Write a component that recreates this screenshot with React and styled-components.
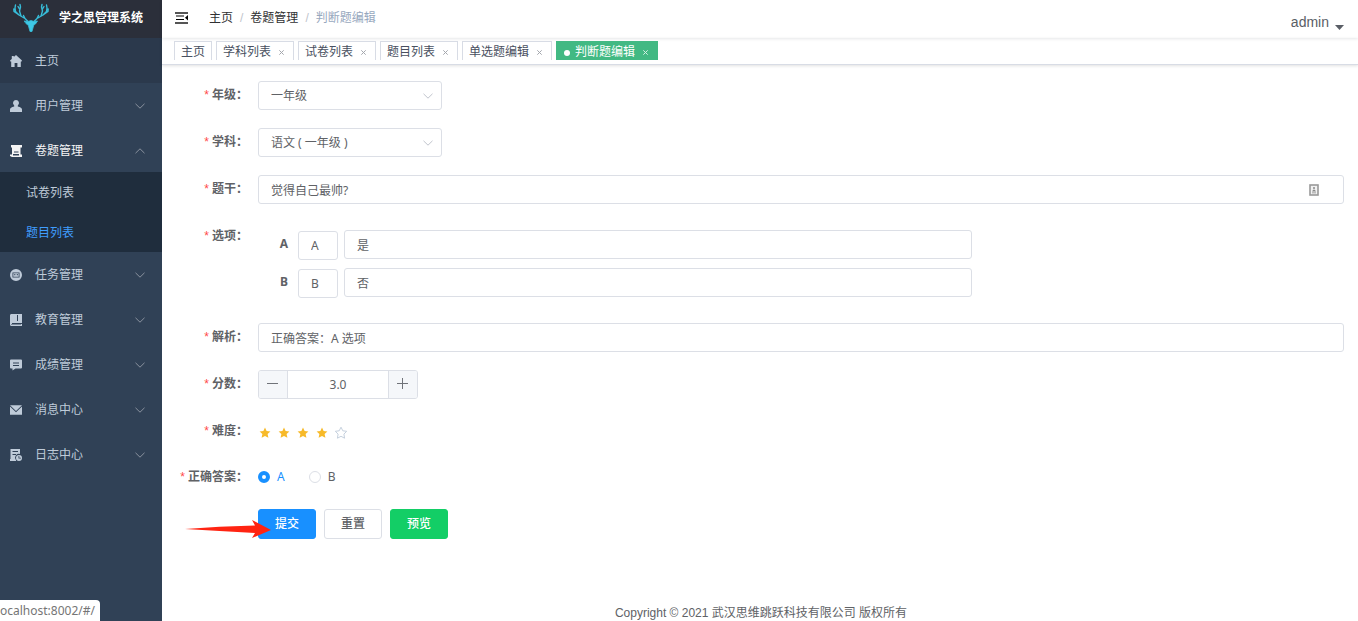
import React from 'react';
import styled, { createGlobalStyle, css } from 'styled-components';

const ui = '"Liberation Sans", "Noto Sans CJK SC", sans-serif';
const field = '"Noto Sans", "Noto Sans CJK SC", sans-serif';

const GlobalStyle = createGlobalStyle`
  *, *::before, *::after { box-sizing: border-box; }
  body { margin: 0; font-family: ${ui}; font-size: 12px; line-height: 16px; color: #606266; background: #fff; }
  a { color: inherit; text-decoration: none; }
  button, input, select { font: inherit; color: inherit; margin: 0; }
  svg { display: block; flex: none; }
`;

const Shell = styled.div`
  display: flex;
  min-height: 100vh;
`;

/* Sidebar */
const Sidebar = styled.aside`
  flex: none;
  width: 162px;
  background: #304156;
`;
const Brand = styled.a`
  display: flex;
  align-items: center;
  gap: 10px;
  height: 38px;
  padding: 0 13px 2px;
  background: #2b2f3a;
  white-space: nowrap;
  && { color: #fff; }
  font-weight: 700;
`;
const Menu = styled.ul`
  list-style: none;
  margin: 0;
  padding: 0;
`;
const MenuLink = styled.a`
  display: flex;
  align-items: center;
  height: 45px;
  padding: 0 17px 0 10px;
  background: ${p => (p.$hover ? '#2b394c' : 'transparent')};
  && { color: ${p => (p.$open ? '#f4f4f5' : '#bfcbd9')}; }
`;
const MenuText = styled.span`
  flex: 1;
  margin-left: 13px;
`;
const SubMenu = styled(Menu)`
  margin-top: -1px;
  background: #1f2d3d;
`;
const SubLink = styled.a`
  display: flex;
  align-items: center;
  height: 40px;
  padding: 2px 0 0 26px;
  && { color: ${p => (p.$active ? '#409eff' : '#bfcbd9')}; }
`;

/* Top bars */
const Main = styled.div`
  flex: 1;
  min-width: 0;
  display: flex;
  flex-direction: column;
`;
const Navbar = styled.header`
  display: flex;
  align-items: center;
  height: 38px;
  padding: 0 14px 2px 13px;
  box-shadow: 0 1px 3px rgba(0, 21, 41, 0.1);
`;
const IconButton = styled.button`
  padding: 0;
  border: 0;
  background: none;
  cursor: pointer;
`;
const Crumbs = styled.nav`
  display: flex;
  gap: 7px;
  flex: 1;
  margin-left: 20px;
  color: #303133;
`;
const Slash = styled.span`
  color: #c0c4cc;
`;
const Current = styled.span`
  color: #97a8be;
`;
const UserButton = styled(IconButton)`
  display: flex;
  align-items: flex-end;
  gap: 6px;
  padding-top: 8px;
  && { font-size: 14px; color: #5a5e66; }
`;
const TagsBar = styled.nav`
  display: flex;
  gap: 4px;
  height: 27px;
  padding: 3px 12px 5px;
  border-bottom: 1px solid #d8dce5;
  box-shadow: 0 1px 3px rgba(0, 0, 0, 0.12);
`;
const Tag = styled.div`
  display: flex;
  align-items: center;
  height: 19px;
  padding: 1px 6px 0;
  border: 1px solid #d8dce5;
  border-bottom: 0;
  color: #495060;
  white-space: nowrap;
  ${p => p.$active && css`
    background: #42b983;
    border-color: #42b983;
    color: #fff;
  `}
`;
const Dot = styled.span`
  width: 6px;
  height: 6px;
  margin: 2px 5px 0 1px;
  border-radius: 50%;
  background: #fff;
`;
const CloseButton = styled(IconButton)`
  display: grid;
  place-items: center;
  width: 12px;
  height: 12px;
  margin: 1px 0 0 4px;
  && { color: ${p => (p.$active ? '#d3efe2' : '#a3a6ad')}; }
`;

/* Form */
const Form = styled.form`
  display: flex;
  flex-direction: column;
  gap: 18px;
  padding: 16px 14px 0 0;
`;
const Item = styled.div`
  display: flex;
`;
const labelText = css`
  flex: none;
  width: 96px;
  padding-right: 10px;
  font-weight: 700;
  line-height: 28px;
  text-align: right;
  white-space: nowrap;
`;
const Label = styled.label`
  ${labelText}
`;
const GroupLabel = styled.span`
  ${labelText}
`;
const Star = styled.span`
  margin-right: 3px;
  font-weight: 400;
  color: #ff4949;
`;
const Content = styled.div`
  flex: 1;
  min-width: 0;
`;
const box = css`
  height: 29px;
  border: 1px solid #dcdfe6;
  border-radius: 3px;
  background: #fff;
  outline: none;
  && { font-family: ${field}; }
`;
const InputWrap = styled.div`
  display: flex;
  align-items: center;
  padding-right: 22px;
  ${box}
`;
const BareInput = styled.input`
  flex: 1;
  min-width: 0;
  height: 100%;
  padding: 0 12px;
  border: 0;
  outline: none;
  background: none;
`;
const TextInput = styled.input`
  ${box}
  width: ${p => p.$width || '100%'};
  padding: 0 12px;
`;
const LetterInput = styled(TextInput)`
  align-self: flex-end;
`;
const SelectWrap = styled.div`
  display: grid;
  grid-template-columns: 1fr 10px 9px;
  align-items: center;
  width: 184px;
  & > select { grid-area: 1 / 1 / 2 / 4; }
  & > svg { grid-area: 1 / 2; pointer-events: none; z-index: 1; }
`;
const Select = styled.select`
  ${box}
  appearance: none;
  width: 100%;
  padding: 1px 28px 0 12px;
  && { color: #606266; }
`;
const Options = styled.div`
  display: flex;
  flex-direction: column;
  gap: 8px;
  padding: 8px 0 7px;
`;
const OptionRow = styled.div`
  display: flex;
  height: 30px;
  gap: 6px;
`;
const OptionLabel = styled.label`
  width: 34px;
  padding-right: 4px;
  font-family: ${field};
  font-weight: 700;
  line-height: 28px;
  text-align: right;
`;
const Stepper = styled.div`
  ${box}
  display: flex;
  width: 160px;
  overflow: hidden;
`;
const StepButton = styled.button`
  display: grid;
  place-items: center;
  flex: none;
  width: 29px;
  padding: 0 1px 2px 0;
  border: 0 solid #dcdfe6;
  border-width: ${p => (p.$right ? '0 0 0 1px' : '0 1px 0 0')};
  background: #f5f7fa;
`;
const StepValue = styled(BareInput)`
  padding: 0;
  text-align: center;
`;
const Rate = styled.div`
  display: flex;
  align-items: center;
  gap: 5px;
  height: 28px;
  padding-top: 4px;
`;
const HiddenRadio = styled.input`
  appearance: none;
  position: absolute;
  width: 0;
  height: 0;
`;
const Radios = styled.div`
  display: flex;
  align-items: center;
  gap: 24px;
  height: 27px;
  font-family: ${field};
`;
const RadioLabel = styled.label`
  display: flex;
  align-items: center;
  gap: 7px;
  color: ${p => (p.$on ? '#1890ff' : '#606266')};
`;
const Radio = styled.input`
  appearance: none;
  width: 12px;
  height: 12px;
  border: 1px solid #dcdfe6;
  border-radius: 50%;
  background: #fff;
  &:checked { border: 4px solid #1890ff; }
`;
const Actions = styled.div`
  position: relative;
  display: flex;
  gap: 8px;
  padding-left: 96px;
`;
const Button = styled.button`
  height: 30px;
  padding: 0 16px;
  border: 1px solid ${p => p.$bg || '#dcdfe6'};
  border-radius: 3px;
  background: ${p => p.$bg || '#fff'};
  && { color: ${p => (p.$bg ? '#fff' : '#606266')}; font-weight: 500; }
`;
const Pointer = styled.svg`
  position: absolute;
  left: 23px;
  top: 11px;
  pointer-events: none;
`;
const Footer = styled.footer`
  margin-top: auto;
  padding-left: 2px;
  text-align: center;
`;
const StatusBubble = styled.div`
  position: fixed;
  left: 0;
  bottom: 0;
  width: 100px;
  height: 21px;
  border-radius: 0 4px 0 0;
  background: #fff;
  font-family: "Noto Sans", sans-serif;
  line-height: 21px;
  color: #757575;
  white-space: nowrap;
`;

/* Drawings */
const Deer = () => (
  <svg width="36" height="30" viewBox="0 0 36 30" fill="none" stroke="#37bcd8" strokeLinecap="round" strokeLinejoin="round">
    <path d="M15 18.500 12 15.500 6 12 2.500 8.500 2 5 2.500 2M6 12 1 8.500 .800 6M8 13 6.500 8 7.500 4 7 1.500M6.500 6 5 3.500M12 15.500 10.500 12.500M21 18.500 24 15.500 30 12 33.500 8.500 34 5 33.500 2M30 12 35 8.500 35.200 6M28 13 29.500 8 28.500 4 29 1.500M29.500 6 31 3.500M24 15.500 25.500 12.500" strokeWidth="1.400" />
    <path d="M11.500 18 15 18.500 18 17.500 21 18.500 24.500 18 22.500 21 20.800 22 19 28.500H17L15.200 22 13.500 21Z" fill="#3ec8e6" strokeWidth=".800" />
  </svg>
);
const Chevron = ({ up, color = '#8a929f' }) => (
  <svg width="10" height="6" viewBox="0 0 10 6" fill="none" stroke={color}>
    <path d={up ? 'M.5 5.2 5 .8 9.5 5.2' : 'M.5 .8 5 5.2 9.5 .8'} />
  </svg>
);
const shapes = {
  home: <path d="M6 0 12 5.600 11.300 6.800 10.800 6.400V12H7.400V8H4.600V12H1.200V6.400L.7 6.800 0 5.600 1.800 3.900V1H3.800V2Z" />,
  user: <path d="M6 0a3 3 0 0 1 1.800 5.400V6.500C10.500 7 12 8 12 9.500V12H0V9.500C0 8 1.500 7 4.200 6.500V5.400A3 3 0 0 1 6 0Z" />,
  paper: <path fillRule="evenodd" d="M1 0H12V2.500H10.500V9.500H12V12H2L0 11V9.500H2V2.500H1ZM4 6.500V7.500H8.500V6.500ZM3 9V10.500H9V9Z" />,
  task: <path fillRule="evenodd" d="M6 0a6 6 0 1 1 0 12A6 6 0 0 1 6 0ZM2.500 3.500V8.500H9.500V3.500ZM3.300 4.300H8.700V7.700H3.300ZM4.300 5V6.300H5.300V5ZM6.800 5V6.300H7.800V5Z" />,
  book: <path fillRule="evenodd" d="M1.500 0H12V9H2V10H12V12H1.500C.6 12 0 11.300 0 10.500V1.500C0 .6.600 0 1.500 0ZM7 1V7H8V1ZM1 10.500H11V11H1Z" />,
  chat: <path fillRule="evenodd" d="M1 .5H11Q12 .5 12 1.500V8.500Q12 9.500 11 9.500H5.500L2.500 11.500V9.500H1Q0 9.500 0 8.500V1.500Q0 .5 1 .5ZM3 3.500V4.500H9V3.500ZM3 6V7H9V6Z" />,
  mail: <path d="M0 1.200H12L6 7ZM0 2.500 6 8.300 12 2.500V10.800H0Z" />,
  log: <path fillRule="evenodd" d="M.5 0H10V5A4 4 0 0 0 5.400 10.500H6V12H0V10H.5ZM2.500 2V3H8V2ZM2.500 5V6H6V5ZM9 6A3 3 0 1 1 9 12 3 3 0 0 1 9 6ZM8.500 7V9.500H11V8.700H9.300V7Z" />,
};
const MenuIcon = ({ name }) => (
  <svg width="12" height="12" viewBox="0 0 12 12" fill="currentColor">{shapes[name]}</svg>
);
const Fold = () => (
  <svg width="14" height="12" viewBox="0 0 14 12">
    <path d="M0 0H13V2H0ZM0 10H13V12H0Z" fill="#555" />
    <path d="M1 3.500H9V4.500H1ZM1 7H9V8H1ZM13 3V8.500L10 5.800Z" fill="#000" />
  </svg>
);
const Cross = () => (
  <svg width="5" height="5" viewBox="0 0 5 5" stroke="currentColor"><path d="M.3.3 4.700 4.700M4.700.3.3 4.700" /></svg>
);
const Contact = () => (
  <svg width="12" height="12" viewBox="0 0 12 12">
    <rect x="1" y="1" width="8" height="10" fill="#f2f2f2" stroke="#999" strokeWidth="1.600" />
    <circle cx="5" cy="4" r="1" fill="#888" />
    <path d="M3 7.500Q5 3.500 7 7.500ZM3 8.500H7V9.300H3Z" fill="#888" />
  </svg>
);
const RateStar = ({ on }) => (
  <svg width="14" height="14" viewBox="0 0 14 14">
    {on
      ? <path fill="#f7ba2a" d="M7 1.500 8.600 5 12.400 5.400 9.600 8 10.400 11.800 7 9.900 3.600 11.800 4.400 8 1.600 5.400 5.400 5Z" />
      : <path fill="none" stroke="#c6d1de" d="M7 1.200 8.800 4.800 12.700 5.300 9.900 8.100 10.600 12.200 7 10.300 3.400 12.200 4.100 8.100 1.300 5.300 5.200 4.800Z" />}
  </svg>
);

const entries = [
  ['home', '主页'], ['user', '用户管理'], ['paper', '卷题管理'], ['task', '任务管理'],
  ['book', '教育管理'], ['chat', '成绩管理'], ['mail', '消息中心'], ['log', '日志中心'],
];
const tags = ['主页', '学科列表', '试卷列表', '题目列表', '单选题编辑', '判断题编辑'];

const Entry = ({ icon, text }) => {
  const open = icon === 'paper';
  const home = icon === 'home';
  return (
    <li>
      <MenuLink href="#/" $hover={home} $open={open}>
        <MenuIcon name={icon} />
        <MenuText>{text}</MenuText>
        {!home && <Chevron up={open} />}
      </MenuLink>
      {open && (
        <SubMenu>
          <li><SubLink href="#/">试卷列表</SubLink></li>
          <li><SubLink href="#/" $active>题目列表</SubLink></li>
        </SubMenu>
      )}
    </li>
  );
};

const Field = ({ label, id, children }) => (
  <Item>
    {id
      ? <Label htmlFor={id}><Star>*</Star>{label}：</Label>
      : <GroupLabel><Star>*</Star>{label}：</GroupLabel>}
    <Content>{children}</Content>
  </Item>
);

const Dropdown = ({ id, value }) => (
  <SelectWrap>
    <Select id={id} defaultValue={value}><option>{value}</option></Select>
    <Chevron color="#c0c4cc" />
  </SelectWrap>
);

export default function App() {
  return (
    <>
      <GlobalStyle />
      <Shell>
        <Sidebar>
          <Brand href="#/"><Deer />学之思管理系统</Brand>
          <Menu>
            {entries.map(([icon, text]) => <Entry key={icon} icon={icon} text={text} />)}
          </Menu>
        </Sidebar>
        <Main>
          <Navbar>
            <IconButton type="button" aria-label="折叠菜单"><Fold /></IconButton>
            <Crumbs>
              <a href="#/">主页</a><Slash>/</Slash>
              <a href="#/">卷题管理</a><Slash>/</Slash>
              <Current>判断题编辑</Current>
            </Crumbs>
            <UserButton type="button">
              admin
              <svg width="9" height="5" viewBox="0 0 9 5"><path d="M0 0H9L4.500 5Z" fill="#5a5e66" /></svg>
            </UserButton>
          </Navbar>
          <TagsBar>
            {tags.map((name, i) => {
              const active = i === tags.length - 1;
              return (
                <Tag key={name} $active={active}>
                  {active && <Dot />}
                  <a href="#/">{name}</a>
                  {i > 0 && <CloseButton type="button" aria-label="关闭" $active={active}><Cross /></CloseButton>}
                </Tag>
              );
            })}
          </TagsBar>
          <Form onSubmit={e => e.preventDefault()}>
            <Field label="年级" id="grade"><Dropdown id="grade" value="一年级" /></Field>
            <Field label="学科" id="subject"><Dropdown id="subject" value="语文 ( 一年级 )" /></Field>
            <Field label="题干" id="title">
              <InputWrap><BareInput id="title" defaultValue="觉得自己最帅?" /><Contact /></InputWrap>
            </Field>
            <Field label="选项">
              <Options>
                {[['A', '是'], ['B', '否']].map(([k, v]) => (
                  <OptionRow key={k}>
                    <OptionLabel htmlFor={`option-${k}`}>{k}</OptionLabel>
                    <LetterInput aria-label={`选项 ${k} 前缀`} $width="40px" defaultValue={k} />
                    <TextInput id={`option-${k}`} $width="calc(58% - 2px)" defaultValue={v} />
                  </OptionRow>
                ))}
              </Options>
            </Field>
            <Field label="解析" id="analyze"><TextInput id="analyze" defaultValue="正确答案：A 选项" /></Field>
            <Field label="分数" id="score">
              <Stepper>
                <StepButton type="button" aria-label="减少">
                  <svg width="11" height="11" stroke="#707379"><path d="M0 5.500H11" /></svg>
                </StepButton>
                <StepValue id="score" defaultValue="3.0" />
                <StepButton type="button" aria-label="增加" $right>
                  <svg width="11" height="11" stroke="#707379"><path d="M0 5.500H11M5.500 0V11" /></svg>
                </StepButton>
              </Stepper>
            </Field>
            <Field label="难度">
              <Rate role="radiogroup" aria-label="难度">
                {[1, 2, 3, 4, 5].map(n => (
                  <label key={n}>
                    <HiddenRadio type="radio" name="difficult" aria-label={`${n}`} defaultChecked={n === 4} />
                    <RateStar on={n < 5} />
                  </label>
                ))}
              </Rate>
            </Field>
            <Field label="正确答案">
              <Radios role="radiogroup" aria-label="正确答案">
                <RadioLabel $on><Radio type="radio" name="correct" defaultChecked />A</RadioLabel>
                <RadioLabel><Radio type="radio" name="correct" />B</RadioLabel>
              </Radios>
            </Field>
            <Actions>
              <Button type="submit" $bg="#1890ff">提交</Button>
              <Button type="reset">重置</Button>
              <Button type="button" $bg="#13ce66">预览</Button>
              <Pointer width="87" height="19" viewBox="0 0 87 19">
                <path d="M0 9Q34 6 70 5.500L67 0 86 10 67 18 70 13Q34 11 0 9Z" fill="#ff2412" />
              </Pointer>
            </Actions>
          </Form>
          <Footer>Copyright © 2021 武汉思维跳跃科技有限公司 版权所有</Footer>
        </Main>
      </Shell>
      <StatusBubble>ocalhost:8002/#/</StatusBubble>
    </>
  );
}
